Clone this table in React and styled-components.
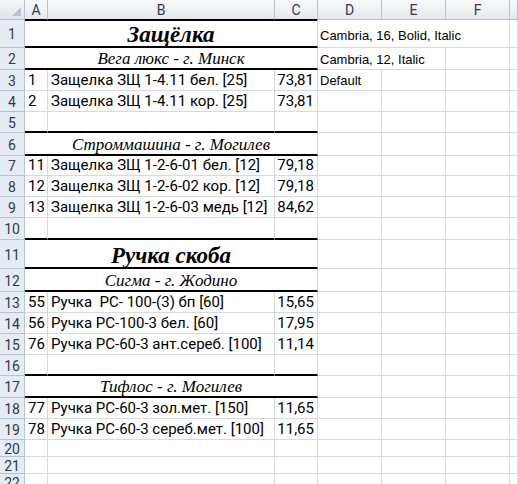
import React from 'react';
import styled, { createGlobalStyle, css } from 'styled-components';

const GlobalStyle = createGlobalStyle`
  html, body { margin: 0; padding: 0; background: #ffffff; }
  body { width: 518px; height: 484px; overflow: hidden; }
`;

const COLS = '25px 23px 227px 43px 64px 64px 64px 1fr';
const GRID = '#d6d9de';
const HDR_LINE = '#b7c3d1';

const Sheet = styled.div`
  width: 518px;
  display: flex;
  flex-direction: column;
  font-family: Roboto, "Liberation Sans", sans-serif;
  color: #000;
`;

const Row = styled.div`
  display: grid;
  grid-template-columns: ${COLS};
  height: ${(p) => p.$h}px;
`;

const Corner = styled.div`
  position: relative;
  background: linear-gradient(#f4f6f9, #dfe4ea);
  border-right: 1px solid ${HDR_LINE};
  border-bottom: 1px solid ${HDR_LINE};
`;

const CornerMark = styled.svg`
  position: absolute;
  right: 3px;
  bottom: 3px;
`;

const ColHead = styled.div`
  background: linear-gradient(#f7f8fa 0%, #eef1f4 55%, #e2e6ec 100%);
  border-right: 1px solid ${HDR_LINE};
  border-bottom: 1px solid ${(p) => (p.$dark ? '#000' : HDR_LINE)};
  display: flex;
  align-items: center;
  justify-content: center;
  font-size: 14px;
  color: #2f3b4b;
  line-height: 1;
  padding-top: 1px;
`;

const RowHead = styled.div`
  background: #e6ecf4;
  border-right: 1px solid ${HDR_LINE};
  border-bottom: 1px solid ${HDR_LINE};
  display: flex;
  align-items: center;
  justify-content: center;
  font-size: 14px;
  color: #2f3b4b;
  line-height: 1;
  padding-top: 1px;
`;

const Cell = styled.div`
  min-width: 0;
  display: flex;
  align-items: flex-end;
  justify-content: ${(p) => p.$align || 'flex-start'};
  padding: 0 3px 2px 3px;
  font-size: 15px;
  line-height: 1;
  white-space: pre;
  border-right: 1px solid ${GRID};
  border-bottom: 1px solid ${GRID};
  ${(p) =>
    p.$span &&
    css`
      grid-column: span ${p.$span};
    `}
  ${(p) =>
    p.$thick &&
    css`
      border-bottom: 2px solid #000;
    `}
  ${(p) =>
    p.$topLine &&
    css`
      box-shadow: inset 0 1px 0 #000;
    `}
`;

const Title = styled(Cell)`
  justify-content: center;
  align-items: center;
  font-family: "Liberation Serif", "DejaVu Serif", serif;
  font-weight: bold;
  font-style: italic;
  font-size: 23px;
  padding: 3px 0 0 0;
`;

const Sub = styled(Cell)`
  justify-content: center;
  align-items: center;
  font-family: "Liberation Serif", "DejaVu Serif", serif;
  font-style: italic;
  font-size: 17px;
  padding: 1px 0 0 0;
`;

const Note = styled(Cell)`
  font-family: "Liberation Sans", Arial, sans-serif;
  font-size: 13px;
  align-items: flex-end;
  padding: 0 0 ${(p) => p.$pb || 4}px 2px;
`;

const rows = [
  { n: 1, h: 28, kind: 'title', text: 'Защёлка', top: true, note: 'Cambria, 16, Bolid, Italic', noteSpan: 3, notePb: 5 },
  { n: 2, h: 22, kind: 'sub', text: 'Вега люкс - г. Минск', note: 'Cambria, 12, Italic', noteSpan: 2, notePb: 3 },
  { n: 3, h: 21, a: '1', b: 'Защелка ЗЩ 1-4.11 бел. [25]', c: '73,81', note: 'Default', notePb: 3 },
  { n: 4, h: 21, a: '2', b: 'Защелка ЗЩ 1-4.11 кор. [25]', c: '73,81' },
  { n: 5, h: 21, thick: true },
  { n: 6, h: 23, kind: 'sub', text: 'Строммашина - г. Могилев' },
  { n: 7, h: 20, a: '11', b: 'Защелка ЗЩ 1-2-6-01 бел. [12]', c: '79,18' },
  { n: 8, h: 21, a: '12', b: 'Защелка ЗЩ 1-2-6-02 кор. [12]', c: '79,18' },
  { n: 9, h: 21, a: '13', b: 'Защелка ЗЩ 1-2-6-03 медь [12]', c: '84,62' },
  { n: 10, h: 22, thick: true },
  { n: 11, h: 29, kind: 'title', text: 'Ручка скоба' },
  { n: 12, h: 23, kind: 'sub', text: 'Сигма - г. Жодино' },
  { n: 13, h: 21, a: '55', b: 'Ручка  РС- 100-(3) бп [60]', c: '15,65' },
  { n: 14, h: 21, a: '56', b: 'Ручка РС-100-3 бел. [60]', c: '17,95' },
  { n: 15, h: 21, a: '76', b: 'Ручка РС-60-3 ант.сереб. [100]', c: '11,14' },
  { n: 16, h: 21, thick: true },
  { n: 17, h: 22, kind: 'sub', text: 'Тифлос - г. Могилев' },
  { n: 18, h: 21, a: '77', b: 'Ручка РС-60-3 зол.мет. [150]', c: '11,65' },
  { n: 19, h: 21, a: '78', b: 'Ручка РС-60-3 сереб.мет. [100]', c: '11,65' },
  { n: 20, h: 17 },
  { n: 21, h: 17 },
  { n: 22, h: 17 },
];

function Tail({ r }) {
  if (r.note) {
    const rest = 3 - (r.noteSpan || 1);
    return (
      <>
        <Note $span={r.noteSpan} $pb={r.notePb}>
          {r.note}
        </Note>
        {Array.from({ length: rest }).map((_, i) => (
          <Cell key={i} />
        ))}
        <Cell />
      </>
    );
  }
  return (
    <>
      <Cell />
      <Cell />
      <Cell />
      <Cell />
    </>
  );
}

function SheetRow({ r }) {
  let main;
  if (r.kind === 'title') {
    main = (
      <Title $span={3} $thick $topLine={r.top}>
        {r.text}
      </Title>
    );
  } else if (r.kind === 'sub') {
    main = (
      <Sub $span={3} $thick>
        {r.text}
      </Sub>
    );
  } else {
    main = (
      <>
        <Cell $thick={r.thick}>{r.a}</Cell>
        <Cell $thick={r.thick}>{r.b}</Cell>
        <Cell $thick={r.thick} $align="flex-end">
          {r.c}
        </Cell>
      </>
    );
  }
  return (
    <Row $h={r.h}>
      <RowHead>{r.n}</RowHead>
      {main}
      <Tail r={r} />
    </Row>
  );
}

export default function App() {
  return (
    <>
      <GlobalStyle />
      <Sheet>
        <Row $h={20}>
          <Corner>
            <CornerMark width="9" height="9" viewBox="0 0 9 9">
              <polygon points="9,0 9,9 0,9" fill="#b9c3cf" />
            </CornerMark>
          </Corner>
          <ColHead $dark>A</ColHead>
          <ColHead $dark>B</ColHead>
          <ColHead $dark>C</ColHead>
          <ColHead>D</ColHead>
          <ColHead>E</ColHead>
          <ColHead>F</ColHead>
          <ColHead />
        </Row>
        {rows.map((r) => (
          <SheetRow key={r.n} r={r} />
        ))}
      </Sheet>
    </>
  );
}
